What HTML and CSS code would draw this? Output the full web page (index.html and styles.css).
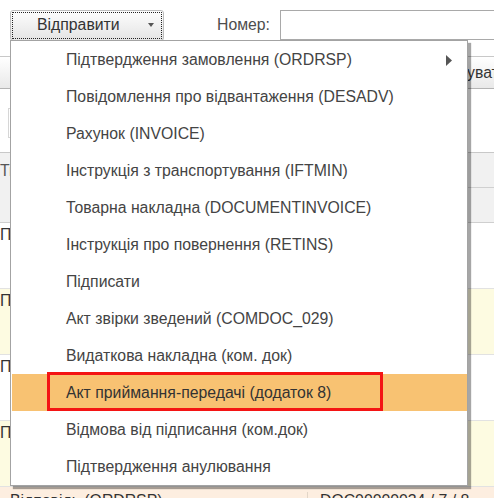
FILE: index.html
```html
<!DOCTYPE html>
<html lang="uk">

    <head>
        <meta charset="UTF-8">
        <meta name="viewport" content="width=device-width, initial-scale=1.0">
        <title>Відправити</title>
        <link rel="stylesheet" href="styles.css">
    </head>

    <body>
        <div id="page">
            <div class="toolbar">
                <button class="send-button">
                    <span class="send-label">Відправити</span>
                    <span class="drop-arrow"></span>
                </button>
                <label class="field-label">Номер:</label>
                <input type="text" class="field-input">
            </div>

            <div class="cmdbar">
                <span class="cmd-right">Сформувати звіт</span>
            </div>

            <div class="filters">
                <div class="filter-box"></div>
            </div>

            <div class="grid">
                <div class="grid-head">
                    <div class="head-cell">Тип</div>
                    <div class="head-rest">
                        <div class="head-sub"></div>
                        <div class="head-sub"></div>
                    </div>
                </div>
                <div class="grid-row">Прийняття</div>
                <div class="grid-row row-yellow">Прийняття</div>
                <div class="grid-row">Прийняття</div>
                <div class="grid-row row-yellow">Прийняття</div>
                <div class="grid-row row-peach">
                    <span class="cell-type">Відповідь (ORDRSP)</span>
                    <span class="cell-doc">DOC00000034 / 7 / 8</span>
                </div>
            </div>

            <div class="menu">
                <div class="menu-item">
                    Підтвердження замовлення (ORDRSP)
                    <svg class="submenu-arrow" width="6" height="11" viewBox="0 0 6 11">
                        <path d="M0 0 L6 5.5 L0 11 Z" fill="#555"/>
                    </svg>
                </div>
                <div class="menu-item">Повідомлення про відвантаження (DESADV)</div>
                <div class="menu-item">Рахунок (INVOICE)</div>
                <div class="menu-item">Інструкція з транспортування (IFTMIN)</div>
                <div class="menu-item">Товарна накладна (DOCUMENTINVOICE)</div>
                <div class="menu-item">Інструкція про повернення (RETINS)</div>
                <div class="menu-item">Підписати</div>
                <div class="menu-item">Акт звірки зведений (COMDOC_029)</div>
                <div class="menu-item">Видаткова накладна (ком. док)</div>
                <div class="menu-item menu-item-active">
                    Акт приймання-передачі (додаток 8)
                    <span class="mark-box"></span>
                </div>
                <div class="menu-item">Відмова від підписання (ком.док)</div>
                <div class="menu-item">Підтвердження анулювання</div>
            </div>
        </div>
    </body>

</html>
```

FILE: styles.css
```css
html {
    height: 100%;
}

body {
    margin: 0px;
    overflow: hidden;
    width: 100%;
    height: 100%;
    font-size: 15.8px;
    font-family: "Liberation Sans", Arial, sans-serif;
    background: #ffffff;
    color: #444444;
}

body * {
    box-sizing: border-box;
}

#page {
    position: relative;
    width: 100%;
    height: 100%;
    overflow: hidden;
}

/* top toolbar */

.toolbar {
    display: flex;
    align-items: center;
    height: 56px;
    padding: 0px 0px 8px 10px;
}

.send-button {
    flex-shrink: 0;
    display: flex;
    align-items: center;
    width: 154px;
    height: 31px;
    margin-top: 2px;
    padding: 0px 9px 0px 26px;
    font: inherit;
    color: #333333;
    background: linear-gradient(#fdfdfd, #e4e4e4);
    border: 1px solid #bdbdbd;
    border-radius: 3px;
    outline: 1px dotted #222;
    outline-offset: -3px;
}

.drop-arrow {
    margin-left: auto;
    width: 0px;
    height: 0px;
    border-left: 3px solid transparent;
    border-right: 3px solid transparent;
    border-top: 4px solid #555555;
}

.field-label {
    flex-shrink: 0;
    margin: 2px 10px 0px 53px;
    color: #4d4d4d;
}

.field-input {
    flex-shrink: 0;
    width: 260px;
    height: 30px;
    margin-top: 2px;
    border: 1px solid #a9a9a9;
    background: #ffffff;
}

/* command bar */

.cmdbar {
    display: flex;
    align-items: center;
    height: 33px;
    border-top: 1px solid #c8c8c8;
    border-bottom: 1px solid #b4b4b4;
    background: linear-gradient(#ffffff, #e9e9e9);
    overflow: hidden;
}

.cmd-right {
    margin-left: 414px;
    color: #333333;
    white-space: nowrap;
}

.filters {
    height: 63px;
    padding: 19px 0px 0px 8px;
}

.filter-box {
    width: 300px;
    height: 30px;
    border: 1px solid #d6d6d6;
}

/* grid */

.grid-head {
    display: flex;
    height: 71px;
    background: #f1f1f1;
    border-top: 1px solid #c8c8c8;
    border-bottom: 1px solid #cfcfcf;
}

.head-cell {
    width: 200px;
    padding-top: 9px;
    color: #555555;
}

.head-rest {
    flex-grow: 1;
    display: flex;
    flex-direction: column;
}

.head-sub {
    height: 35px;
}

.head-sub:first-child {
    border-bottom: 1px solid #d0d0d0;
}

.grid-row {
    display: flex;
    height: 66px;
    padding-top: 3px;
    border-bottom: 1px solid #e2e2e2;
    color: #333333;
    white-space: nowrap;
}

.row-yellow {
    background: #fdfbe1;
}

.row-peach {
    background: #fdeee0;
    padding-top: 5px;
}

.cell-type {
    width: 308px;
    padding-left: 10px;
    border-right: 1px solid #e2d6c8;
}

.cell-doc {
    padding-left: 12px;
}

/* popup menu */

.menu {
    position: absolute;
    left: 10px;
    top: 40px;
    width: 458px;
    border: 1px solid #a3a3a3;
    background: #ffffff;
    box-shadow: 3px 3px 1px rgba(0, 0, 0, 0.35);
}

.menu-item {
    position: relative;
    display: flex;
    align-items: center;
    height: 37px;
    padding-left: 55px;
    white-space: nowrap;
}

.menu-item-active {
    margin-left: 1px;
    padding-left: 54px;
    background: #f8c272;
    color: #333333;
}

.submenu-arrow {
    position: absolute;
    right: 15px;
    top: 14px;
}

.mark-box {
    position: absolute;
    left: 35px;
    top: -2px;
    width: 336px;
    height: 39px;
    border: 3px solid #f41414;
}
```
